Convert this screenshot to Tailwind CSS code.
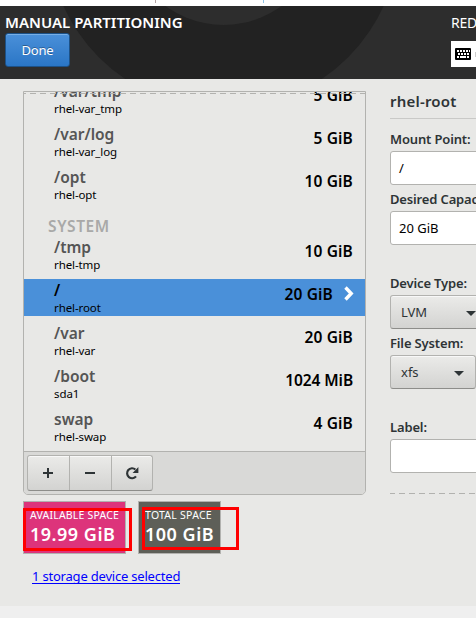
<!DOCTYPE html>
<html lang="en">
<head>
<meta charset="utf-8">
<title>Manual Partitioning</title>
<script src="https://cdn.jsdelivr.net/npm/@tailwindcss/browser@4"></script>
</head>
<body class="w-[476px] h-[618px] overflow-hidden bg-[#efefef] font-['Noto_Sans','Open_Sans',sans-serif] text-black">
<div class="h-[6px] bg-white flex pl-[155px] gap-[107px]"><i class="w-px h-[3px] bg-[#b3a3a3]"></i><i class="w-px h-[3px] bg-[#8fc3e6]"></i></div>
<header class="relative h-[73px] bg-[#2d2d2d] overflow-hidden">
  <svg class="absolute inset-0" width="476" height="73" viewBox="0 6 476 73"><circle cx="223.5" cy="-67" r="176" fill="#222"/><circle cx="223.5" cy="-73" r="98" fill="#2d2d2d"/></svg>
  <div class="relative flex h-full text-white">
    <div class="w-[451px] flex-none pl-[5px] pt-[6px]">
      <h1 class="text-[15px] leading-[21px] font-semibold whitespace-nowrap">MANUAL PARTITIONING</h1>
      <button class="block w-[65px] h-[34px] rounded-[3px] border border-[#1c5187] bg-linear-to-b from-[#4a90d9] to-[#2a76c6] shadow-[inset_0_1px_#76aee6] text-[13px] leading-[30px] tracking-[-0.2px] [text-shadow:0_-1px_#00000050]">Done</button>
    </div>
    <div class="flex-none w-[25px] overflow-hidden pt-[6px]">
      <div class="text-[14px] leading-[21px] tracking-[-0.2px] whitespace-nowrap">RED</div>
      <div class="mt-[8px] h-[26px] bg-white flex items-center pl-[4px] gap-[4px]">
        <svg class="flex-none" width="16" height="12" viewBox="0 0 16 12"><rect width="16" height="12" rx="1" fill="#000"/><path d="M2 3h2m1 0h2m1 0h2m1 0h2m1 0h1M3 6h2m1 0h2m1 0h2m1 0h2M2 9h2m1 0h6m1 0h2" stroke="#fff" stroke-width="2"/></svg>
        <i class="w-px h-[5px] bg-[#ccc]"></i>
      </div>
    </div>
  </div>
</header>
<main class="h-[527px] bg-[#e8e8e6] flex pl-[23px] pt-[12px]">
  <section class="w-[343px] flex-none">
    <div class="relative h-[404px] border border-[#b2b2af] rounded-b-[5px] flex flex-col overflow-hidden">
      <div class="h-[359px] flex-none overflow-hidden">
        <div class="-mt-[12px] flex flex-col gap-[6px]">
          <div class="h-[37px] pl-[30px] pr-[12px] flex justify-between"><div><div class="text-[15.5px] leading-[22px] font-semibold text-[#555]">/var/tmp</div><div class="text-[11.5px] leading-[14px] tracking-[-0.1px]">rhel-var_tmp</div></div><b class="text-[15.5px] leading-[31px] font-semibold tracking-[0.15px]">5 GiB</b></div>
          <div class="h-[37px] pl-[30px] pr-[12px] flex justify-between"><div><div class="text-[15.5px] leading-[22px] font-semibold text-[#555]">/var/log</div><div class="text-[11.5px] leading-[14px] tracking-[-0.1px]">rhel-var_log</div></div><b class="text-[15.5px] leading-[31px] font-semibold tracking-[0.15px]">5 GiB</b></div>
          <div class="h-[37px] pl-[30px] pr-[12px] flex justify-between"><div><div class="text-[15.5px] leading-[22px] font-semibold text-[#555]">/opt</div><div class="text-[11.5px] leading-[14px] tracking-[-0.1px]">rhel-opt</div></div><b class="text-[15.5px] leading-[31px] font-semibold tracking-[0.15px]">10 GiB</b></div>
        </div>
        <div class="h-[33px] pt-[12px] pl-[24px] text-[15.5px] leading-[23px] font-semibold tracking-[0.6px] text-[#a9a9a8]">SYSTEM</div>
        <div class="flex flex-col gap-[6px]">
          <div class="h-[37px] pl-[30px] pr-[12px] flex justify-between"><div><div class="text-[15.5px] leading-[22px] font-semibold text-[#555]">/tmp</div><div class="text-[11.5px] leading-[14px] tracking-[-0.1px]">rhel-tmp</div></div><b class="text-[15.5px] leading-[31px] font-semibold tracking-[0.15px]">10 GiB</b></div>
          <div class="h-[37px] pl-[30px] pr-[11px] flex bg-[#4a90d9]"><div class="flex-1"><div class="text-[15.5px] leading-[22px] font-semibold">/</div><div class="text-[11.5px] leading-[14px] tracking-[-0.1px]">rhel-root</div></div><b class="text-[15.5px] leading-[31px] font-semibold tracking-[0.15px]">20 GiB</b><svg class="ml-[11px] mt-[7px]" width="10" height="15" viewBox="0 0 10 15"><path d="M1.5 1.5 7.2 7.5 1.5 13.5" fill="none" stroke="#fff" stroke-width="3.4"/></svg></div>
          <div class="h-[37px] pl-[30px] pr-[12px] flex justify-between"><div><div class="text-[15.5px] leading-[22px] font-semibold text-[#555]">/var</div><div class="text-[11.5px] leading-[14px] tracking-[-0.1px]">rhel-var</div></div><b class="text-[15.5px] leading-[31px] font-semibold tracking-[0.15px]">20 GiB</b></div>
          <div class="h-[37px] pl-[30px] pr-[12px] flex justify-between"><div><div class="text-[15.5px] leading-[22px] font-semibold text-[#555]">/boot</div><div class="text-[11.5px] leading-[14px] tracking-[-0.1px]">sda1</div></div><b class="text-[15.5px] leading-[31px] font-semibold tracking-[-0.1px]">1024 MiB</b></div>
          <div class="h-[37px] pl-[30px] pr-[12px] flex justify-between"><div><div class="text-[15.5px] leading-[22px] font-semibold text-[#555]">swap</div><div class="text-[11.5px] leading-[14px] tracking-[-0.1px]">rhel-swap</div></div><b class="text-[15.5px] leading-[31px] font-semibold tracking-[0.15px]">4 GiB</b></div>
        </div>
      </div>
      <svg class="absolute left-0 top-[1px]" width="341" height="1"><path d="M-4 .5H341" stroke="#b2b2af" stroke-dasharray="6 4"/></svg>
      <div class="flex-1 border-t border-[#b2b2af] bg-[#d9d9d7] pl-[3px] pt-[3px]">
        <div class="w-[126px] h-[36px] rounded-[3px] border border-[#b2b2af] border-b-[#8d8d8a] bg-linear-to-b from-[#ebebe9] to-[#d3d3d1] shadow-[inset_0_1px_#f8f8f8] grid grid-cols-[42px_42px_40px] divide-x divide-[#b2b2af]">
          <div class="flex items-center justify-center pr-px"><svg width="10" height="10"><path d="M0 5h10M5 0v10" stroke="#2e3436" stroke-width="2"/></svg></div>
          <div class="flex items-center justify-center pr-px"><svg width="10" height="10"><path d="M0 5h10" stroke="#2e3436" stroke-width="2"/></svg></div>
          <div class="flex items-center justify-center pr-px"><svg width="14" height="14" viewBox="0 0 14 14"><path d="M11 10.4A5 5 0 1 1 10.4 3.5" fill="none" stroke="#2e3436" stroke-width="2.2"/><path d="M13.4 1v6H7.6z" fill="#2e3436"/></svg></div>
        </div>
      </div>
    </div>
    <div class="relative mt-[6px] flex gap-[12px] text-white">
      <div class="w-[103px] h-[53px] bg-[#dd347b] border border-[#b2b2af] pl-[6px] pt-[6px] whitespace-nowrap"><div class="text-[10.5px] leading-[15px] tracking-[0.2px]">AVAILABLE SPACE</div><div class="text-[18px] leading-[22px] font-semibold tracking-[0.5px]">19.99 GiB</div></div>
      <div class="w-[83px] h-[53px] bg-[#5e5f58] border border-[#b2b2af] pl-[6px] pt-[6px] whitespace-nowrap"><div class="text-[10.5px] leading-[15px] tracking-[0.25px]">TOTAL SPACE</div><div class="text-[18px] leading-[22px] font-semibold tracking-[0.5px]">100 GiB</div></div>
      <div class="absolute left-0 top-[7px] w-[109px] h-[43px] border-3 border-[#f00]"></div>
      <div class="absolute left-[119px] top-[6px] w-[97px] h-[43px] border-3 border-[#f00]"></div>
    </div>
    <div class="pl-[9px] pt-[12px] flex"><a class="text-[13px] leading-[20px] h-[18px] tracking-[-0.2px] border-b border-[#00f] text-[#00f]">1 storage device selected</a></div>
  </section>
  <section class="ml-[24px] w-[86px] flex-none overflow-hidden text-[13px] text-[#2e3436] whitespace-nowrap">
    <h2 class="h-[28px] text-[15px] leading-[21px] font-semibold tracking-[0.2px] border-b border-[#c9c9c7]">rhel-root</h2>
    <div class="h-[32px] pt-[10px] leading-[20px] font-semibold tracking-[-0.15px]">Mount Point:</div>
    <div class="w-[110px] h-[34px] rounded-[3px] border border-[#b2b2af] bg-white pl-[8px] leading-[32px] text-black">/</div>
    <div class="h-[26px] pt-[4px] leading-[20px] font-semibold tracking-[-0.15px]">Desired Capac</div>
    <div class="w-[110px] h-[34px] rounded-[3px] border border-[#b2b2af] bg-white pl-[8px] leading-[32px] text-black">20 GiB</div>
    <div class="h-[50px] pt-[28px] leading-[20px] font-semibold tracking-[-0.15px]">Device Type:</div>
    <div class="w-[110px] h-[34px] rounded-[3px] border border-[#b2b2af] border-b-[#8d8d8a] bg-linear-to-b from-[#ebebe9] to-[#d3d3d1] shadow-[inset_0_1px_#f8f8f8] pl-[10px] pr-[23px] leading-[32px] flex justify-between items-center"><span>LVM</span><svg class="mt-[2px]" width="10" height="5"><path d="M0 0h10L5 5z" fill="#2e3436"/></svg></div>
    <div class="h-[26px] pt-[4px] leading-[20px] font-semibold tracking-[-0.15px]">File System:</div>
    <div class="w-[86px] h-[34px] rounded-[3px] border border-[#b2b2af] border-b-[#8d8d8a] bg-linear-to-b from-[#ebebe9] to-[#d3d3d1] shadow-[inset_0_1px_#f8f8f8] pl-[10px] pr-[11px] leading-[32px] flex justify-between items-center"><span>xfs</span><svg class="mt-[2px]" width="10" height="5"><path d="M0 0h10L5 5z" fill="#2e3436"/></svg></div>
    <div class="h-[50px] pt-[28px] leading-[20px] font-semibold tracking-[-0.15px]">Label:</div>
    <div class="w-[110px] h-[34px] rounded-[3px] border border-[#b2b2af] bg-white"></div>
    <svg class="mt-[20px] block" width="86" height="1"><path d="M-1 .5H86" stroke="#b2b2af" stroke-dasharray="6 4"/></svg>
  </section>
</main>
</body>
</html>
